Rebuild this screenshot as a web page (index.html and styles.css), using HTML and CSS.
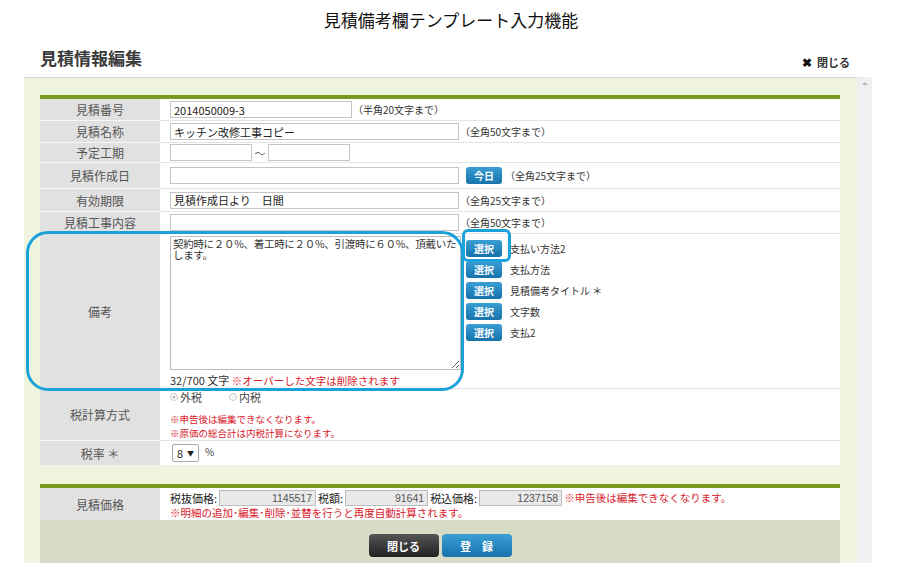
FILE: index.html
```html
<!DOCTYPE html>
<html lang="ja">
<head>
<meta charset="utf-8">
<title>見積備考欄テンプレート入力機能</title>
<link rel="stylesheet" href="styles.css">
</head>
<body>
<h1 class="page-title">見積備考欄テンプレート入力機能</h1>
<div class="dialog-head">
  <h2 class="dialog-title">見積情報編集</h2>
  <a class="close-link"><span class="close-x">✖</span>閉じる</a>
</div>
<div class="frame">
  <div class="panel">
    <div class="form-block">
      <div class="row h22">
        <div class="lbl">見積番号</div>
        <div class="val"><input class="in w182" value="2014050009-3"><span class="note">（半角20文字まで）</span></div>
      </div>
      <div class="row h22">
        <div class="lbl">見積名称</div>
        <div class="val"><input class="in w289" value="キッチン改修工事コピー"><span class="note">（全角50文字まで）</span></div>
      </div>
      <div class="row h20">
        <div class="lbl">予定工期</div>
        <div class="val"><input class="in w82" value=""><span class="tilde">〜</span><input class="in w82" value=""></div>
      </div>
      <div class="row h26">
        <div class="lbl">見積作成日</div>
        <div class="val"><input class="in w289" value=""><button class="btn-blue small">今日</button><span class="note">（全角25文字まで）</span></div>
      </div>
      <div class="row h23">
        <div class="lbl">有効期限</div>
        <div class="val"><input class="in w289" value="見積作成日より　日間"><span class="note">（全角25文字まで）</span></div>
      </div>
      <div class="row h22">
        <div class="lbl">見積工事内容</div>
        <div class="val"><input class="in w289" value=""><span class="note">（全角50文字まで）</span></div>
      </div>
      <div class="row remarks">
        <div class="lbl">備考</div>
        <div class="val top">
          <div class="remark-col">
            <textarea class="remark-text">契約時に２０%、着工時に２０%、引渡時に６０%、頂戴いたします。</textarea>
            <div class="counter">32/700 文字 <span class="red">※オーバーした文字は削除されます</span></div>
          </div>
          <ul class="tpl-list">
            <li><button class="btn-blue small">選択</button><span>支払い方法2</span></li>
            <li><button class="btn-blue small">選択</button><span>支払方法</span></li>
            <li><button class="btn-blue small">選択</button><span>見積備考タイトル ＊</span></li>
            <li><button class="btn-blue small">選択</button><span>文字数</span></li>
            <li><button class="btn-blue small">選択</button><span>支払2</span></li>
          </ul>
        </div>
        <div class="hl-big"></div>
        <div class="hl-small"></div>
      </div>
      <div class="row taxrow">
        <div class="lbl">税計算方式</div>
        <div class="val col">
          <div class="radios">
            <label class="radio"><span class="dot on"></span>外税</label>
            <label class="radio"><span class="dot"></span>内税</label>
          </div>
          <div class="red notes"><div>※申告後は編集できなくなります。</div><div>※原価の総合計は内税計算になります。</div></div>
        </div>
      </div>
      <div class="row h24 last">
        <div class="lbl">税率 ＊</div>
        <div class="val"><span class="select">8 <span class="arrow">▼</span></span><span class="pct">%</span></div>
      </div>
    </div>

    <div class="form-block price-block">
      <div class="row pricerow last">
        <div class="lbl">見積価格</div>
        <div class="val col">
          <div class="price-line">
            <span>税抜価格:</span><span class="ro w97">1145517</span>
            <span>税額:</span><span class="ro w83">91641</span>
            <span>税込価格:</span><span class="ro w83">1237158</span>
            <span class="red">※申告後は編集できなくなります。</span>
          </div>
          <div class="red">※明細の追加･編集･削除･並替を行うと再度自動計算されます。</div>
        </div>
      </div>
    </div>
    <div class="actions">
      <button class="btn-dark">閉じる</button>
      <button class="btn-blue big">登　録</button>
    </div>
  </div>
  <div class="scrollbar"><span class="up"></span></div>
</div>
</body>
</html>
```
FILE: styles.css
```css
* { box-sizing: border-box; }
html, body { margin: 0; padding: 0; background: #fff; }
body {
  width: 902px;
  height: 572px;
  overflow: hidden;
  font-family: "Liberation Sans", "Noto Sans CJK JP", sans-serif;
  color: #333;
}
.page-title {
  margin: 0;
  height: 40px;
  line-height: 40px;
  text-align: center;
  font-size: 17px;
  font-weight: normal;
  color: #111;
  font-family: "Noto Sans CJK JP", sans-serif;
}
.dialog-head {
  height: 37px;
  display: flex;
  align-items: flex-start;
  justify-content: space-between;
  padding: 0 52px 0 40px;
}
.dialog-title {
  margin: 7px 0 0;
  font-size: 17px;
  font-weight: bold;
  color: #3a3a3a;
  font-family: "Noto Sans CJK JP", sans-serif;
  line-height: 22px;
}
.close-link {
  margin-top: 15px;
  font-size: 11px;
  font-weight: bold;
  color: #333;
  font-family: "Noto Sans CJK JP", sans-serif;
  display: flex;
  align-items: center;
  gap: 5px;
  line-height: 14px;
}
.close-x { font-size: 12px; color: #111; }

.frame {
  margin-left: 24px;
  width: 848px;
  height: 486px;
  display: flex;
}
.panel {
  flex: 1;
  background: #eef4dd;
  border-top: 1px solid #d8dcd0;
  padding: 17px 17px 0 16px;
  display: flex;
  flex-direction: column;
}
.scrollbar {
  width: 15px;
  background: #f0f0f0;
  display: flex;
  justify-content: center;
  padding-top: 5px;
}
.up {
  width: 0; height: 0;
  border-left: 3px solid transparent;
  border-right: 3px solid transparent;
  border-bottom: 3px solid #b5b5b5;
}

.form-block {
  border-top: 4px solid #7a9a1e;
  position: relative;
  font-family: "Noto Sans CJK JP", sans-serif;
}
.row {
  display: grid;
  grid-template-columns: 120px 1fr;
  grid-template-rows: 100%;
}
.lbl {
  background: #e1e1e1;
  border-bottom: 1px solid #f6f6f6;
  display: flex;
  align-items: center;
  justify-content: center;
  font-size: 12px;
  color: #555;
  min-height: 0;
}
.val {
  background: #fff;
  border-bottom: 1px solid #e4e4e4;
  display: flex;
  align-items: center;
  padding-left: 10px;
  font-size: 11px;
  color: #222;
  min-height: 0;
}
.row.last .lbl, .row.last .val { border-bottom: none; }
.h20 { height: 20px; }
.h22 { height: 22px; }
.h23 { height: 23px; }
.h24 { height: 24px; }
.h26 { height: 26px; }

.in {
  height: 17px;
  border: 1px solid #c4c4c4;
  padding: 0 3px;
  font-size: 11px;
  font-family: "Noto Sans CJK JP", sans-serif;
  color: #222;
  background: #fff;
  margin: 0;
}
.w182 { width: 182px; }
.w289 { width: 289px; }
.w82 { width: 82px; }
.note { margin-left: 1px; font-size: 10px; color: #333; }
.tilde { width: 16px; text-align: center; color: #666; font-size: 11px; }

.btn-blue {
  border: none;
  border-radius: 3px;
  background: linear-gradient(#3a9fd4, #1672ab);
  color: #fff;
  font-weight: bold;
  font-family: "Noto Sans CJK JP", sans-serif;
  padding: 0;
  cursor: pointer;
}
.btn-blue.small {
  width: 36px;
  height: 17px;
  font-size: 10px;
  line-height: 17px;
}
.val > .btn-blue.small { margin-left: 7px; margin-right: 2px; }

.remarks { height: 155px; position: relative; }
.val.top { align-items: flex-start; }
.remark-col { display: flex; flex-direction: column; }
.remark-text {
  margin: 2px 0 0;
  width: 291px;
  height: 134px;
  border: 1px solid #bcbcbc;
  resize: both;
  padding: 1px 2px;
  font-size: 10.5px;
  line-height: 11px;
  font-family: "Noto Sans CJK JP", sans-serif;
  color: #333;
  letter-spacing: -0.3px;
}
.counter { margin-top: 3px; font-size: 11px; color: #333; line-height: 14px; }
.counter .red { font-size: 10.5px; }
.red { color: #d8202a; }
.tpl-list {
  list-style: none;
  margin: 6px 0 0 5px;
  padding: 0;
  display: flex;
  flex-direction: column;
  gap: 4px;
}
.tpl-list li { display: flex; align-items: center; gap: 8px; font-size: 10px; color: #333; height: 17px; }

.hl-big {
  position: absolute;
  left: -14px;
  top: -3px;
  width: 438px;
  height: 160px;
  border: 3px solid #1ca2db;
  border-radius: 22px;
  pointer-events: none;
}
.hl-small {
  position: absolute;
  left: 422px;
  top: -5px;
  width: 49px;
  height: 33px;
  border: 3px solid #1ca2db;
  border-radius: 6px;
  pointer-events: none;
}

.taxrow { height: 52px; }
.val.col { flex-direction: column; align-items: flex-start; justify-content: flex-start; }
.radios { display: flex; gap: 27px; margin-top: 1px; height: 14px; line-height: 14px; color: #444; }
.radio { display: flex; align-items: center; gap: 2px; font-size: 11px; }
.dot {
  width: 8px; height: 8px; border-radius: 50%;
  border: 1px solid #ccc;
  background: #fafafa;
  position: relative;
}
.dot.on::after {
  content: "";
  position: absolute;
  left: 2px; top: 2px;
  width: 2px; height: 2px; border-radius: 50%;
  background: #888;
}
.notes { margin-top: 8px; font-size: 9.5px; }
.notes > div { height: 14px; line-height: 14px; }

.select {
  margin-left: 2px;
  width: 27px;
  height: 18px;
  border: 1px solid #a9a9a9;
  border-radius: 2px;
  font-size: 11px;
  display: flex;
  align-items: center;
  padding-left: 4px;
  gap: 4px;
  color: #222;
}
.arrow { font-size: 7px; }
.pct { margin-left: 6px; font-size: 10px; color: #444; align-self: flex-start; margin-top: 3px; }

.price-block { margin-top: 19px; }
.pricerow { height: 32px; }
.pricerow .val { padding-top: 1px; font-size: 11px; }
.price-line { display: flex; align-items: center; gap: 2px; height: 17px; white-space: nowrap; }
.ro {
  height: 16px;
  border: 1px solid #bdbdbd;
  background: #e9e9e9;
  text-align: right;
  padding-right: 3px;
  font-size: 10.5px;
  line-height: 14px;
  color: #555;
  font-family: "Liberation Sans", sans-serif;
}
.w97 { width: 97px; }
.w83 { width: 83px; }
.pricerow .red { font-size: 10.5px; line-height: 13px; }

.actions {
  flex: 1;
  background: #d6dcc5;
  display: flex;
  justify-content: center;
  align-items: flex-start;
  padding-top: 14px;
  gap: 3px;
}
.btn-dark {
  width: 70px;
  height: 23px;
  border: none;
  border-radius: 4px;
  background: linear-gradient(#555, #222);
  color: #fff;
  font-size: 11px;
  font-weight: bold;
  font-family: "Noto Sans CJK JP", sans-serif;
}
.btn-blue.big {
  width: 70px;
  height: 23px;
  font-size: 11px;
  border-radius: 4px;
}
```
